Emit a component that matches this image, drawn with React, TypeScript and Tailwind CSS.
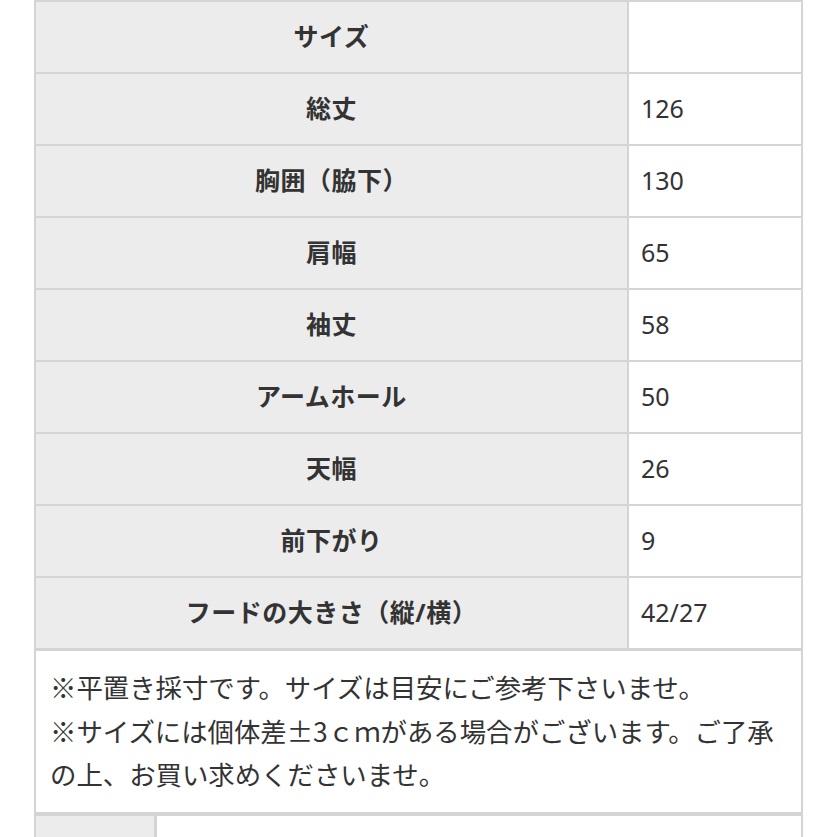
import React from 'react';

const rows = [
  { label: 'サイズ', value: '' },
  { label: '総丈', value: '126' },
  { label: '胸囲（脇下）', value: '130' },
  { label: '肩幅', value: '65' },
  { label: '袖丈', value: '58' },
  { label: 'アームホール', value: '50' },
  { label: '天幅', value: '26' },
  { label: '前下がり', value: '9' },
  { label: 'フードの大きさ（縦/横）', value: '42/27' },
];

export default function App() {
  return (
    <main
      className="bg-white min-h-screen h-[837px] overflow-hidden text-[#333]"
      style={{ fontFamily: '"Noto Sans", "Noto Sans CJK JP", sans-serif' }}
    >
      <div className="ml-[34px] w-[769px] border-x-2 border-t-2 border-[#d4d4d4]">
        {rows.map((row, i) => (
          <div key={i} className="flex h-[72px] border-b-2 border-[#d4d4d4]">
            <div className="w-[593px] shrink-0 bg-[#ececec] border-r-2 border-[#d4d4d4] flex items-center justify-center text-[25px] font-bold tracking-[0.02em]">
              {row.label}
            </div>
            <div className="flex-1 flex items-center pl-[12px] text-[25px] bg-white">
              {row.value}
            </div>
          </div>
        ))}

        {/* 注意書き */}
        <div
          className="border-t-[1px] border-[#d4d4d4] border-b-4 h-[166px] pt-[14px] pl-[14px] pr-[16px] text-[26.4px] leading-[43.5px]"
          style={{ fontFamily: '"Noto Sans CJK JP", sans-serif' }}
        >
          <p>※平置き採寸です。サイズは目安にご参考下さいませ。</p>
          <p>※サイズには個体差±3ｃｍがある場合がございます。ご了承の上、お買い求めくださいませ。</p>
        </div>

        <div className="flex h-[60px]">
          <div className="w-[121px] shrink-0 bg-[#ececec] border-r-[3px] border-[#d4d4d4]"></div>
          <div className="flex-1 bg-white"></div>
        </div>
      </div>
    </main>
  );
}
